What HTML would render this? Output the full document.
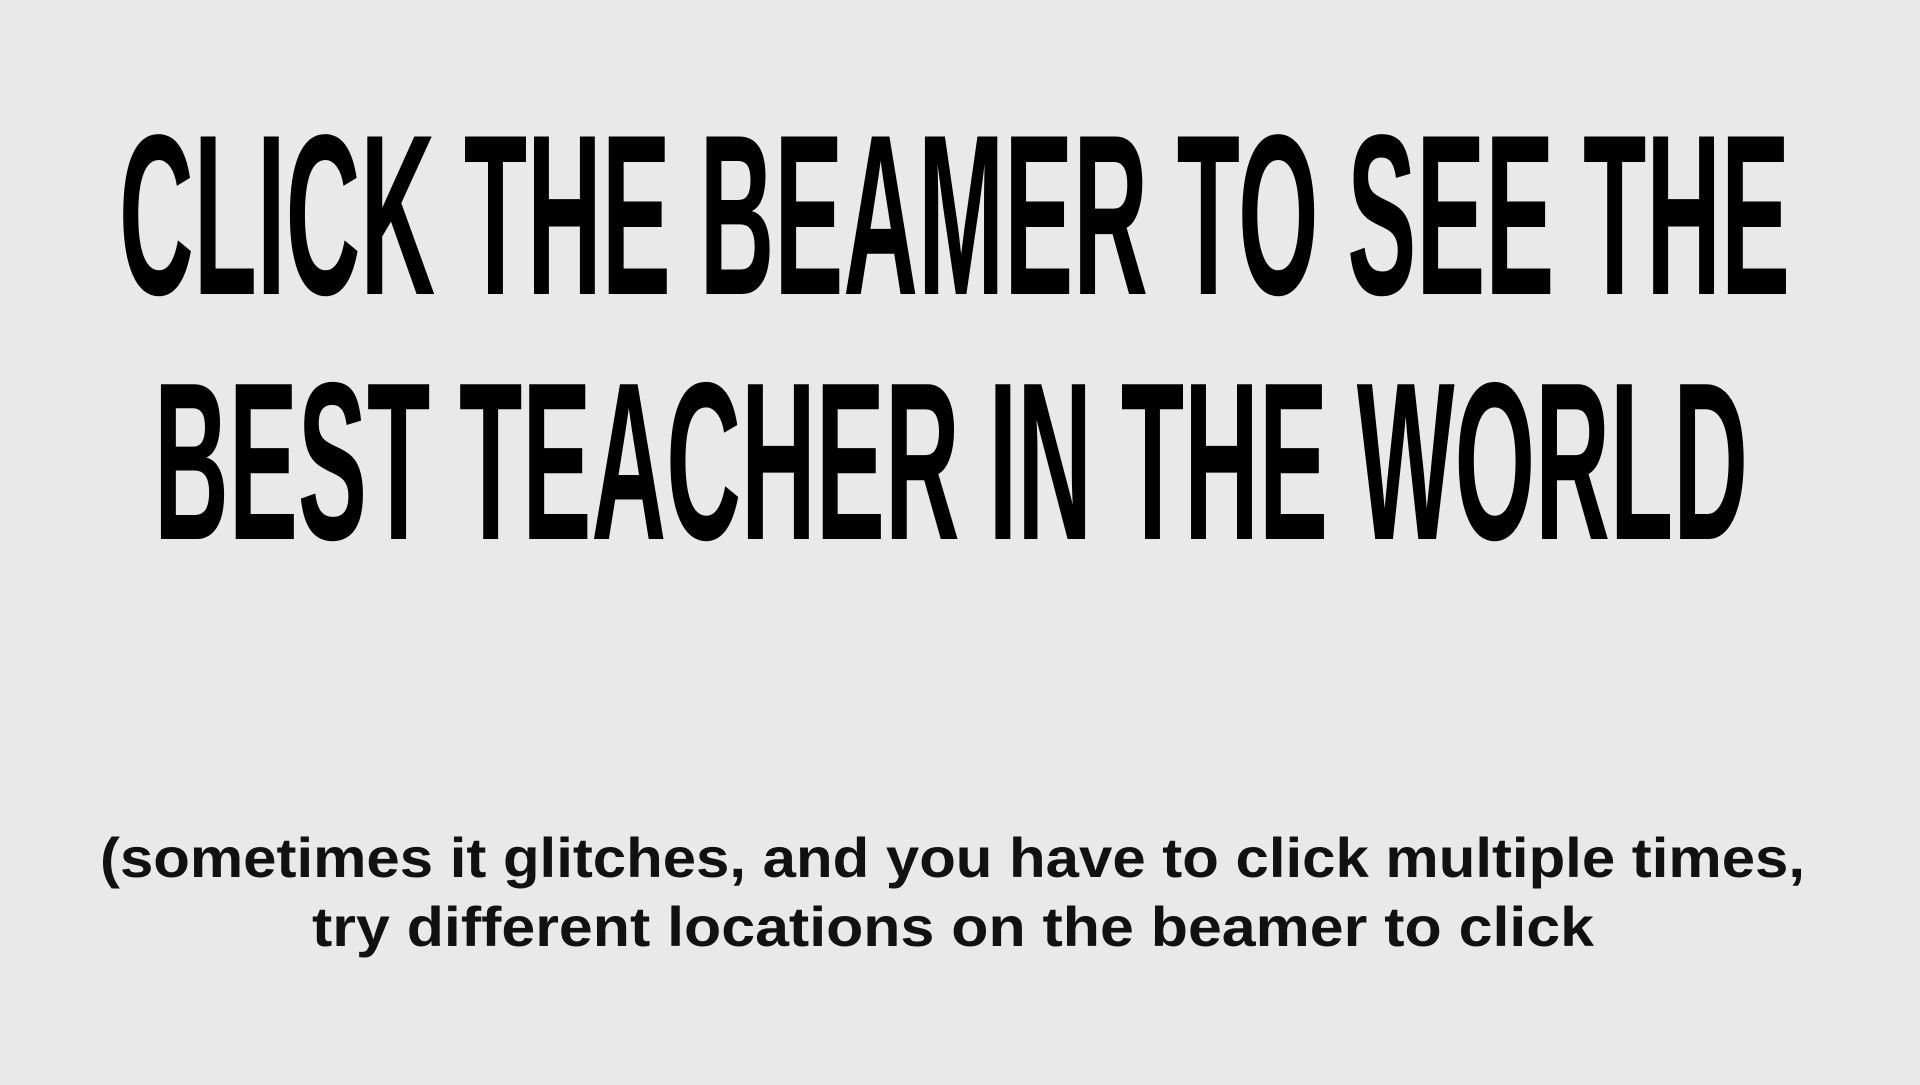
<!DOCTYPE html>
<html><head><meta charset="utf-8"><style>
html,body{margin:0;padding:0;background:#e9e9e9;width:1920px;height:1085px;overflow:hidden}
svg{display:block}
</style></head><body>
<svg width="1920" height="1085" viewBox="0 0 1920 1085" xmlns="http://www.w3.org/2000/svg">
<rect width="1920" height="1085" fill="#e9e9e9"/>
<g font-family="'Liberation Sans', sans-serif" font-weight="bold" fill="#000">
<text x="119" y="294" font-size="229" textLength="1671" lengthAdjust="spacingAndGlyphs">CLICK THE BEAMER TO SEE THE</text>
<text x="154" y="539" font-size="225" textLength="1594" lengthAdjust="spacingAndGlyphs">BEST TEACHER IN THE WORLD</text>
<text x="100" y="877" font-size="56" fill="#111" textLength="1705" lengthAdjust="spacingAndGlyphs">(sometimes it glitches, and you have to click multiple times,</text>
<text x="312" y="946" font-size="56" fill="#111" textLength="1282" lengthAdjust="spacingAndGlyphs">try different locations on the beamer to click</text>
</g>
</svg>
</body></html>
